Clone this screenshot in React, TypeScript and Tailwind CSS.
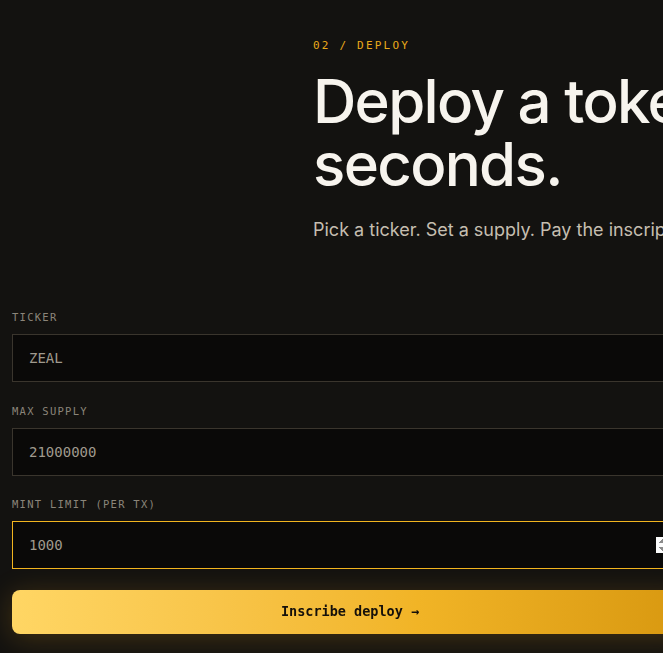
import { useState } from 'react';

const mono = "font-['DejaVu_Sans_Mono','Liberation_Mono',monospace]";

interface FieldProps {
  label: string;
  value: string;
  onChange: (v: string) => void;
  type?: string;
  autoFocus?: boolean;
}

function Field({ label, value, onChange, type = 'text', autoFocus }: FieldProps) {
  return (
    <label className="flex flex-col gap-[9px]">
      <span className={`${mono} text-[10.5px] leading-4 uppercase tracking-[0.12em] text-[#8b857a]`}>
        {label}
      </span>
      <input
        type={type}
        value={value}
        autoFocus={autoFocus}
        onChange={(e) => onChange(e.target.value)}
        className={`${mono} h-12 w-full bg-[#0a0908] border border-[#3a352d] px-4 text-[14px] text-[#a09a8e] caret-white outline-none focus:border-[#f2b51f]`}
      />
    </label>
  );
}

export default function App() {
  const [ticker, setTicker] = useState('ZEAL');
  const [supply, setSupply] = useState('21000000');
  const [limit, setLimit] = useState('1000');

  return (
    <div className="h-[653px] w-full overflow-clip bg-[#131210] font-['Inter','Noto_Sans',sans-serif]">
      <div className="w-[1100px] px-3 pt-[38px]">
        {/* Section intro */}
        <div className="grid grid-cols-[301px_1fr]">
          <div />
          <div>
            <p className={`${mono} text-[11px] leading-4 tracking-[0.2em] text-[#eaaa1a]`}>
              02 / DEPLOY
            </p>
            <h2 className="mt-[16px] text-[60px] leading-[63px] font-medium tracking-[-0.028em] text-[#f7f4ee]">
              Deploy a token in
              <br />
              seconds.
            </h2>
            <p className="mt-[20px] text-[18px] leading-7 text-[#c5beb0]">
              Pick a ticker. Set a supply. Pay the inscription fee. That's it.
            </p>
          </div>
        </div>

        {/* Deploy form */}
        <form
          className="mt-[65px] w-[676px] flex flex-col gap-[20.5px]"
          onSubmit={(e) => e.preventDefault()}
        >
          <Field label="Ticker" value={ticker} onChange={setTicker} />
          <Field label="Max supply" value={supply} onChange={setSupply} type="number" />
          <Field label="Mint limit (per tx)" value={limit} onChange={setLimit} type="number" autoFocus />
          <button
            type="submit"
            className={`${mono} h-11 w-full rounded-lg bg-gradient-to-r from-[#ffd664] via-[#f1b426] via-60% to-[#d8980f] text-[13.5px] font-bold text-[#15100a] shadow-[0_4px_28px_rgba(240,170,30,0.22)]`}
          >
            Inscribe deploy →
          </button>
        </form>
      </div>
    </div>
  );
}
